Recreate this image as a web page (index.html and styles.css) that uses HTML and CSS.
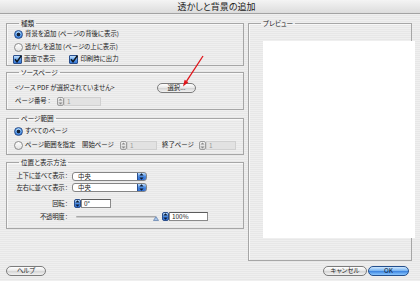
FILE: index.html
```html
<!DOCTYPE html>
<html lang="ja">
<head>
<meta charset="utf-8">
<title>透かしと背景の追加</title>
<link rel="stylesheet" href="styles.css">
</head>
<body>
<div class="window">
  <div class="titlebar">透かしと背景の追加</div>
  <div class="main">
    <div class="left">
      <fieldset class="group g-type">
        <legend>種類</legend>
        <div class="content">
          <div class="row r1"><span class="radio on"></span><span>背景を追加 (ページの背後に表示)</span></div>
          <div class="row r2"><span class="radio"></span><span>透かしを追加 (ページの上に表示)</span></div>
          <div class="row r3 checks">
            <span class="check"><span class="cb"><svg viewBox="0 0 9 9" width="9" height="9"><path d="M2 4.2 L4 6.8 L8.5 0.5" fill="none" stroke="#101820" stroke-width="1.5"/></svg></span>画面で表示</span>
            <span class="check c2"><span class="cb"><svg viewBox="0 0 9 9" width="9" height="9"><path d="M2 4.2 L4 6.8 L8.5 0.5" fill="none" stroke="#101820" stroke-width="1.5"/></svg></span>印刷時に出力</span>
          </div>
        </div>
      </fieldset>

      <fieldset class="group g-source">
        <legend>ソースページ</legend>
        <div class="content">
          <div class="row s1"><span class="nosrc">&lt;ソース PDF が選択されていません&gt;</span><span class="btn choose">選択...</span></div>
          <div class="row s2"><span class="pnl">ページ番号 :</span><span class="spin dis pn"><span class="step"><svg viewBox="0 0 7 9" width="7" height="9"><path d="M3.5 1.5 L5.5 3.6 H1.5Z M3.5 7.5 L5.5 5.4 H1.5Z" fill="#8a8a8a"/></svg></span><span class="field">1</span></span></div>
        </div>
      </fieldset>

      <fieldset class="group g-range">
        <legend>ページ範囲</legend>
        <div class="content">
          <div class="row p1"><span class="radio on"></span><span>すべてのページ</span></div>
          <div class="row p2"><span class="radio"></span><span class="specify">ページ範囲を指定</span>
            <span class="lbl-start">開始ページ</span>
            <span class="spin dis rng"><span class="step"><svg viewBox="0 0 7 9" width="7" height="9"><path d="M3.5 1.5 L5.5 3.6 H1.5Z M3.5 7.5 L5.5 5.4 H1.5Z" fill="#8a8a8a"/></svg></span><span class="field">1</span></span>
            <span class="lbl-end">終了ページ</span>
            <span class="spin dis rng"><span class="step"><svg viewBox="0 0 7 9" width="7" height="9"><path d="M3.5 1.5 L5.5 3.6 H1.5Z M3.5 7.5 L5.5 5.4 H1.5Z" fill="#8a8a8a"/></svg></span><span class="field">1</span></span>
          </div>
        </div>
      </fieldset>

      <fieldset class="group g-pos">
        <legend>位置と表示方法</legend>
        <div class="content grid">
          <span class="lab q1">上下に並べて表示 :</span>
          <span class="popup q1"><span class="ptext">中央</span><span class="cap"><svg viewBox="0 0 9 9" width="9" height="9"><path d="M4.5 1.2 L6.6 3.6 H2.4Z M4.5 7.8 L6.6 5.4 H2.4Z" fill="#0c1a30"/></svg></span></span>
          <span class="lab q2">左右に並べて表示 :</span>
          <span class="popup q2"><span class="ptext">中央</span><span class="cap"><svg viewBox="0 0 9 9" width="9" height="9"><path d="M4.5 1.2 L6.6 3.6 H2.4Z M4.5 7.8 L6.6 5.4 H2.4Z" fill="#0c1a30"/></svg></span></span>
          <span class="lab q3">回転 :</span>
          <span class="spin rot q3"><span class="step blue"><svg viewBox="0 0 7 9" width="7" height="9"><path d="M3.5 1.2 L5.6 3.6 H1.4Z M3.5 7.8 L5.6 5.4 H1.4Z" fill="#0c1a30"/></svg></span><span class="field">0°</span></span>
          <span class="lab q4">不透明度 :</span>
          <span class="opacity q4">
            <span class="slider"><span class="track"></span><svg class="thumb" viewBox="0 0 6 5" width="6" height="5"><path d="M3 0.6 L5.5 4.5 H0.5Z" fill="#a9c6ea" stroke="#5a7aa8" stroke-width="0.7"/></svg></span>
            <span class="spin op"><span class="step blue"><svg viewBox="0 0 7 9" width="7" height="9"><path d="M3.5 1.2 L5.6 3.6 H1.4Z M3.5 7.8 L5.6 5.4 H1.4Z" fill="#0c1a30"/></svg></span><span class="field">100%</span></span>
          </span>
        </div>
      </fieldset>
    </div>

    <fieldset class="group g-preview">
      <legend>プレビュー</legend>
      <div class="canvas"></div>
    </fieldset>
  </div>

  <div class="footer">
    <span class="btn help">ヘルプ</span>
    <span class="actions">
      <span class="btn cancel">キャンセル</span>
      <span class="btn ok">OK</span>
    </span>
  </div>

  <svg class="arrow" viewBox="0 0 420 281" width="420" height="281">
    <path d="M203 56 L186.6 81.2" stroke="#e0141a" stroke-width="1.3" fill="none"/>
    <path d="M183 86.5 L188.4 82.3 L184.6 79.8Z" fill="#e0141a"/>
  </svg>
</div>
</body>
</html>
```

FILE: styles.css
```css
* { box-sizing: border-box; margin: 0; padding: 0; }
html, body { width: 420px; height: 281px; overflow: hidden; }
body {
  font-family: "Noto Sans CJK JP", "Noto Sans", sans-serif;
  font-size: 6.4px;
  line-height: 8px;
  color: #1a1a1a;
  font-feature-settings: "palt";
  background: repeating-linear-gradient(#efefef 0 1px, #e7e7e7 1px 2px);
}
.window { position: relative; display: flex; flex-direction: column; height: 281px; }

.titlebar {
  height: 14px;
  line-height: 13px;
  padding-left: 13px;
  text-align: center;
  font-size: 9px;
  color: #222;
  background: linear-gradient(#f4f4f4, #dcdcdc);
  border-bottom: 1px solid #a2a2a2;
}

.main { display: flex; gap: 4px; padding: 5px 0 0 6px; }
.left { width: 238px; display: flex; flex-direction: column; }

fieldset.group {
  min-width: 0;
  border: 1px solid #a6a6a6;
  box-shadow: inset 1px 1px 0 #f8f8f8;
  padding: 0 0 0 8px;
}
legend {
  margin-left: 4px;
  padding: 0 2px;
  font-size: 6.6px;
  line-height: 8px;
  color: #222;
}

.g-type { height: 47px; }
.g-source { height: 42px; margin-top: 2px; }
.g-range { height: 41px; margin-top: 4px; }
.g-pos { height: 71px; margin-top: 3px; }

.content { display: flex; flex-direction: column; }
.row { display: flex; align-items: center; height: 12px; white-space: nowrap; }
.row > * { flex: none; }

.g-type .content { padding-top: 1px; margin-left: -1px; }
.g-type .r2 { margin-top: 1px; }

.radio {
  width: 9px; height: 9px;
  margin-right: 2px;
  border-radius: 50%;
  border: 1px solid #8c8c8c;
  background: linear-gradient(#ffffff, #e2e2e2);
}
.radio.on {
  border-color: #2b4f8c;
  background:
    radial-gradient(circle, #14243c 0 1.6px, transparent 2.2px),
    radial-gradient(circle at 50% 30%, #d2ecff 0, #6aaaf0 45%, #2d6fd0 85%);
}

.checks { margin-left: -1px; }
.check { display: inline-flex; align-items: center; }
.check.c2 { margin-left: 14px; }
.cb {
  flex: none;
  width: 9px; height: 9px;
  margin-right: 2px;
  border: 1px solid #2b4f8c;
  border-radius: 1px;
  background: linear-gradient(#c6e4ff, #5a9ae8 55%, #3576d4);
  position: relative;
}
.cb svg { position: absolute; left: -1px; top: -1px; overflow: visible; }

/* source */
.g-source .content { padding-top: 6px; }
.s1 .nosrc { width: 142px; }
.s2 { margin-top: 1px; }
.pnl { width: 42px; }
.btn {
  display: inline-flex; align-items: center; justify-content: center;
  height: 10px;
  border: 1px solid #7c7c7c;
  border-radius: 5px;
  background: linear-gradient(#ffffff, #e6e6e6 50%, #d4d4d4 51%, #f2f2f2);
  font-size: 6.4px;
  color: #222;
}
.choose { width: 39px; }

.spin { display: inline-flex; align-items: center; height: 9px; }
.step {
  flex: none;
  width: 7px; height: 9px;
  border-radius: 2px;
  border: 1px solid #9c9c9c;
  background: linear-gradient(#f4f4f4, #d6d6d6);
  position: relative;
}
.step svg { position: absolute; left: -1px; top: -1px; }
.step.blue {
  border-color: #2b4f8c;
  background: linear-gradient(#bfe0ff, #4a8ae0 50%, #2e6cd0);
}
.field {
  height: 9px;
  line-height: 8px;
  padding-left: 2px;
  font-size: 6.4px;
  background: #fff;
  border: 1px solid #8a8a8a;
  border-top-color: #5c5c5c;
}
.spin.dis .field { background: #e2e2e2; border-color: #d0d0d0; color: #9a9a9a; }
.pn .field { width: 37px; }

/* range */
.g-range .content { padding-top: 3px; margin-left: -1px; }
.g-range .p2 { margin-top: 2px; }
.specify { width: 57px; }
.lbl-start { width: 38px; }
.lbl-end { width: 37px; margin-left: 5px; }
.rng .field { width: 30px; }

/* position grid */
.grid {
  display: grid;
  grid-template-columns: 53px auto;
  column-gap: 4px;
  grid-template-rows: 10px 10px 10px 10px;
  align-items: center;
  padding-top: 5px;
}
.grid .q2 { margin-top: 3px; }
.grid .q3 { margin-top: 15px; }
.grid .q4 { margin-top: 21px; }
.lab {
  grid-column: 1;
  justify-self: end;
  white-space: nowrap;
  letter-spacing: -0.3px;
  margin-right: 1px;
}
.popup {
  grid-column: 2;
  justify-self: start;
  display: flex; align-items: center;
  width: 75px; height: 9px;
  border: 1px solid #858585;
  border-radius: 3px;
  background: #fff;
  overflow: hidden;
}
.ptext { flex: 1; padding-left: 5px; line-height: 7px; }
.cap {
  flex: none;
  width: 10px; height: 9px;
  margin: -1px -1px -1px 0;
  border-radius: 0 3px 3px 0;
  border: 1px solid #2b4f8c;
  background: linear-gradient(#c0e0ff, #4a8ae0 50%, #2e6cd0);
  position: relative;
}
.cap svg { position: absolute; left: -1px; top: -1px; }

.rot { grid-column: 2; margin-left: 2px; justify-self: start; }
.rot .field { width: 30px; }

.opacity { grid-column: 2; display: flex; align-items: center; }
.slider { position: relative; width: 83px; height: 8px; margin-left: 4px; }
.track {
  position: absolute; left: 0; right: 3px; top: 3px;
  height: 2px;
  background: linear-gradient(#9a9a9a, #d8d8d8);
  border-radius: 1px;
}
.thumb { position: absolute; right: 0; top: 3px; }
.op { margin-left: 3px; }
.op .field { width: 39px; }

/* preview */
.g-preview { width: 164px; height: 242px; padding: 0; }
.canvas {
  width: 152px;
  height: 197px;
  margin: 14px 0 0 6px;
  background: #ffffff;
}

/* footer */
.footer {
  display: flex;
  justify-content: space-between;
  padding: 0 11px 0 6px;
  margin-top: 5px;
}
.help { width: 40px; }
.actions { display: flex; gap: 1px; }
.cancel { width: 44px; }
.ok {
  width: 41px;
  border-color: #24508e;
  color: #0e1e3a;
  background: linear-gradient(#cfe8ff, #7cb6f2 45%, #3f86e0 55%, #8cc8ff);
}

.arrow { position: absolute; left: 0; top: 0; pointer-events: none; }
```
